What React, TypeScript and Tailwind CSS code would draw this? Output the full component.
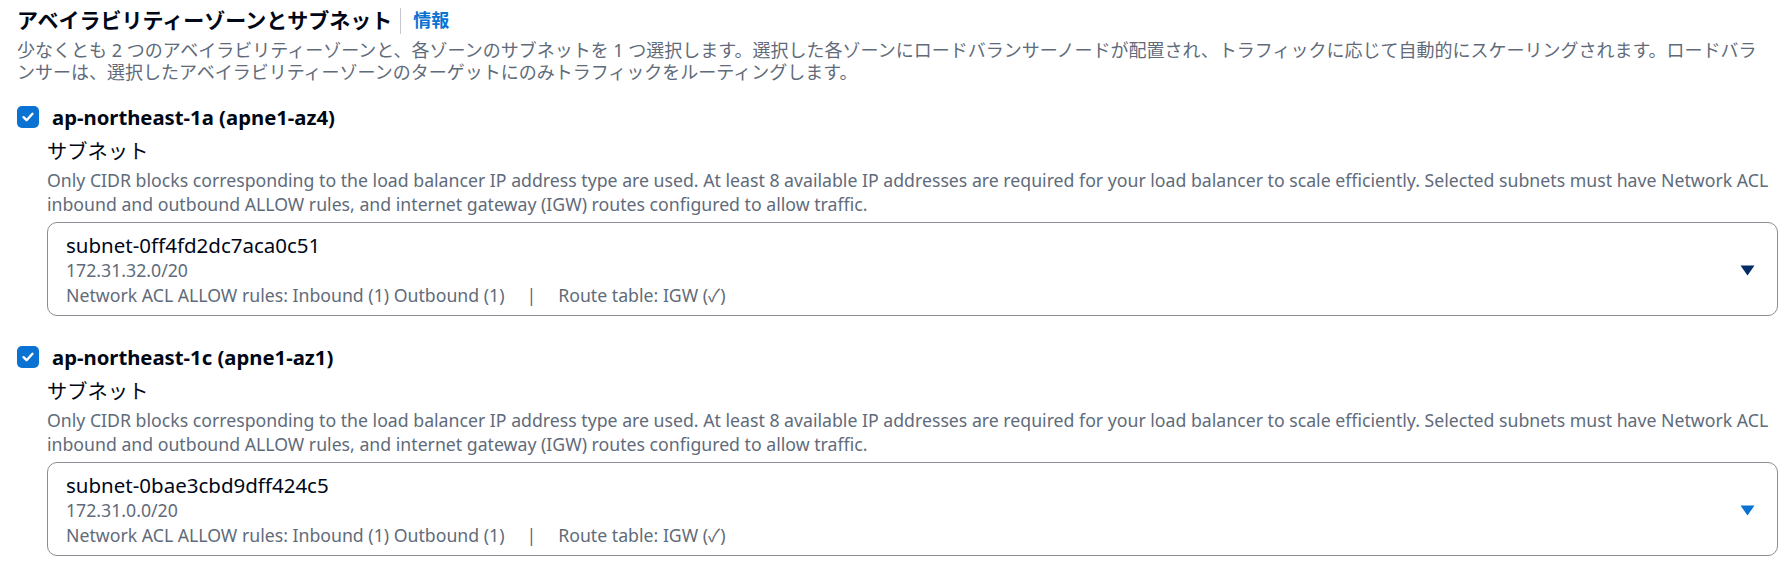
import React from "react";

type Zone = {
  name: string;
  subnetId: string;
  cidr: string;
  arrow: string;
};

const zones: Zone[] = [
  {
    name: "ap-northeast-1a (apne1-az4)",
    subnetId: "subnet-0ff4fd2dc7aca0c51",
    cidr: "172.31.32.0/20",
    arrow: "#032b66",
  },
  {
    name: "ap-northeast-1c (apne1-az1)",
    subnetId: "subnet-0bae3cbd9dff424c5",
    cidr: "172.31.0.0/20",
    arrow: "#0972d3",
  },
];

function CheckBox() {
  return (
    <span className="flex h-[22px] w-[22px] shrink-0 items-center justify-center rounded-[5px] bg-[#0972d3]">
      <svg width="14" height="14" viewBox="0 0 14 14" fill="none">
        <path
          d="M2.5 7.2 L5.6 10.2 L11.5 3.8"
          stroke="white"
          strokeWidth="2.4"
          strokeLinecap="round"
          strokeLinejoin="round"
        />
      </svg>
    </span>
  );
}

function ZoneBlock({ zone }: { zone: Zone }) {
  return (
    <div className="flex flex-col">
      {/* zone checkbox */}
      <div className="flex h-[24px] items-center gap-[13px]">
        <CheckBox />
        <span className="text-[20.3px] font-bold leading-[24px] text-[#000716]">
          {zone.name}
        </span>
      </div>

      <div className="ml-[30px] mr-[11px] flex flex-col">
        <div className="mt-[9px] text-[20.3px] leading-[26px] text-[#000716]">
          サブネット
        </div>
        <p className="mt-[4px] text-[17.7px] leading-[24px] text-[#5f6b7a]">
          Only CIDR blocks corresponding to the load balancer IP address type
          are used. At least 8 available IP addresses are required for your load
          balancer to scale efficiently. Selected subnets must have Network ACL
          inbound and outbound ALLOW rules, and internet gateway (IGW) routes
          configured to allow traffic.
        </p>

        {/* subnet select */}
        <div className="mt-[6px] flex items-center rounded-[10px] border border-[#8c8c94] pb-[7px] pl-[18px] pr-[22px] pt-[9px]">
          <div className="flex flex-1 flex-col">
            <span className="text-[20.5px] leading-[26px] text-[#000716]">
              {zone.subnetId}
            </span>
            <span className="text-[17.7px] leading-[25px] text-[#5f6b7a]">
              {zone.cidr}
            </span>
            <span className="text-[17.7px] leading-[25px] text-[#5f6b7a]">
              Network ACL ALLOW rules: Inbound (1) Outbound (1)
              <span className="mx-[22px]">|</span>
              Route table: IGW (✓)
            </span>
          </div>
          <svg width="15" height="11" viewBox="0 0 15 11">
            <polygon points="0.5,0.5 14.5,0.5 7.5,10.5" fill={zone.arrow} />
          </svg>
        </div>
      </div>
    </div>
  );
}

export default function App() {
  return (
    <div className="h-[570px] w-[1789px] overflow-hidden bg-white pl-[17px] pt-[8px] font-['Noto_Sans','Noto_Sans_CJK_JP',sans-serif]">
      {/* header */}
      <div className="flex h-[25px] items-center">
        <h2 className="text-[21px] font-bold leading-[25px] text-[#000716]">
          アベイラビリティーゾーンとサブネット
        </h2>
        <span className="ml-[8px] mr-[12px] h-[26px] w-px bg-[#c6c6cd]" />
        <a className="text-[18px] font-bold leading-[25px] text-[#0972d3]">
          情報
        </a>
      </div>
      <p className="mr-[11px] mt-[6px] text-[18px] leading-[22px] text-[#5f6b7a]">
        少なくとも 2 つのアベイラビリティーゾーンと、各ゾーンのサブネットを 1
        つ選択します。選択した各ゾーンにロードバランサーノードが配置され、トラフィックに応じて自動的にスケーリングされます。ロードバラ
        <br />
        ンサーは、選択したアベイラビリティーゾーンのターゲットにのみトラフィックをルーティングします。
      </p>

      <div className="mt-[22px] flex flex-col gap-[29px]">
        {zones.map((z) => (
          <ZoneBlock key={z.subnetId} zone={z} />
        ))}
      </div>
    </div>
  );
}
